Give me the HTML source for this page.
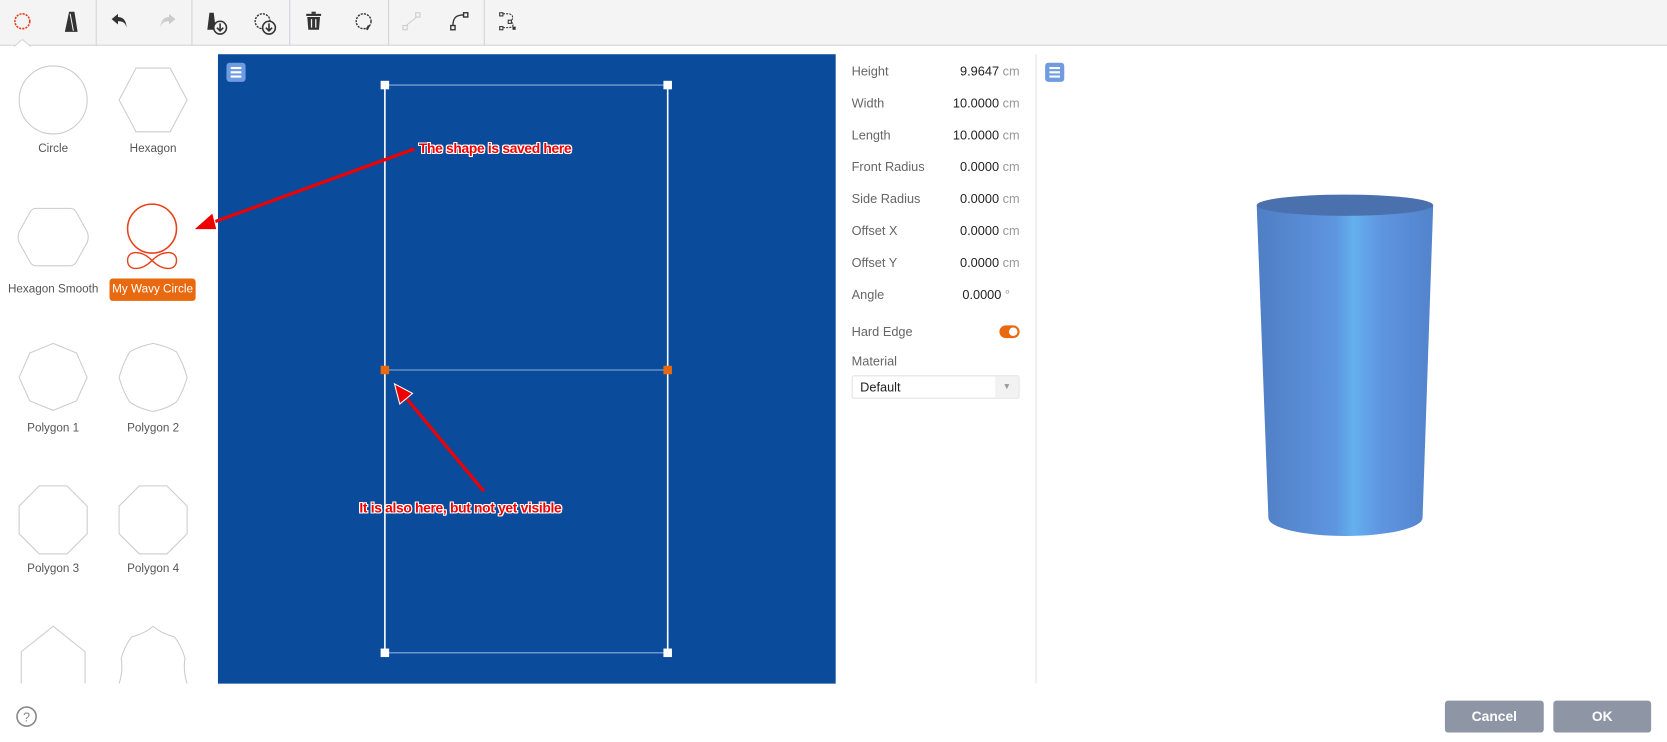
<!DOCTYPE html>
<html><head><meta charset="utf-8"><style>
*{margin:0;padding:0;box-sizing:border-box}
html,body{width:1667px;height:742px;overflow:hidden;background:#fff}
#w{position:absolute;left:0;top:0;width:1568px;height:698px;transform:scale(1.0632);transform-origin:0 0;font-family:"Liberation Sans",Arial,sans-serif}
.tb{position:absolute;left:0;top:0;width:1568px;height:43px;background:#f4f4f5;border-bottom:1px solid #d4d4d8}
.sep{position:absolute;top:0;width:1px;height:43px;background:#d4d4d8}
.ic{position:absolute;top:10px}
.lbl{position:absolute;font-size:11px;color:#555;text-align:center;width:94px}
.canvas{position:absolute;left:205px;top:51px;width:581px;height:592px;background:#0a4b9b}
.prop{position:absolute;left:0;font-size:12px;color:#666}
.val{position:absolute;right:0;font-size:12px;color:#222;width:180px;text-align:right}
.val span{color:#999}
.ann{position:absolute;color:#e00;font-weight:bold;font-size:13px;letter-spacing:-0.3px;text-shadow:-1px -1px 0 #fff,1px -1px 0 #fff,-1px 1px 0 #fff,1px 1px 0 #fff,0 1px 0 #fff,0 -1px 0 #fff,1px 0 0 #fff,-1px 0 0 #fff;white-space:nowrap}
.btn{position:absolute;top:659px;height:30px;background:#8e96a6;border-radius:3px;color:#fff;font-weight:bold;font-size:13px;text-align:center;line-height:30px}
.menu{position:absolute;width:18px;height:18px;background:#6f9be0;border-radius:3px}
.menu i{position:absolute;left:4px;width:10px;height:2px;background:#fff}
</style></head><body><div id="w">
<div class="tb">
<svg class="ic" style="left:11px" width="20" height="20" viewBox="0 0 20 20"><circle cx="10" cy="10" r="7" fill="none" stroke="#e8401a" stroke-width="1.5" stroke-dasharray="2 1"/></svg>
<svg class="ic" style="left:57px" width="20" height="22" viewBox="0 0 20 22"><path d="M8 1 L13 1 L16 20 L4 20 Z" fill="#333"/><path d="M9 3 L12 19" stroke="#f4f4f5" stroke-width="1"/></svg>
<div class="sep" style="left:90px"></div>
<svg class="ic" style="left:103px" width="20" height="20" viewBox="0 0 20 20"><path d="M8 3 L2 8 L8 13 V10 C12 10 15 11 16 16 C16 10 13 6 8 6 Z" fill="#333"/></svg>
<svg class="ic" style="left:147px" width="20" height="20" viewBox="0 0 20 20"><path d="M12 3 L18 8 L12 13 V10 C8 10 5 11 4 16 C4 10 7 6 12 6 Z" fill="#ccc"/></svg>
<div class="sep" style="left:180px"></div>
<svg class="ic" style="left:192px" width="24" height="24" viewBox="0 0 24 24"><path d="M5 2 L9 2 L11 18 L3 18 Z" fill="#333"/><circle cx="15" cy="16" r="6" fill="#f4f4f5" stroke="#333" stroke-width="1.5"/><path d="M15 12 V19 M12 16 L15 19 L18 16" stroke="#333" stroke-width="1.5" fill="none"/></svg>
<svg class="ic" style="left:238px" width="24" height="24" viewBox="0 0 24 24"><circle cx="9" cy="10" r="7" fill="none" stroke="#333" stroke-width="1.3" stroke-dasharray="2 1"/><circle cx="15" cy="16" r="6" fill="#f4f4f5" stroke="#333" stroke-width="1.5"/><path d="M15 12 V19 M12 16 L15 19 L18 16" stroke="#333" stroke-width="1.5" fill="none"/></svg>
<div class="sep" style="left:272px"></div>
<svg class="ic" style="left:287px" width="16" height="20" viewBox="0 0 16 20"><rect x="1" y="3" width="14" height="2" fill="#333"/><rect x="6" y="1" width="4" height="2" fill="#333"/><path d="M2 6 H14 L13 18 H3 Z" fill="#333"/><path d="M6 8 V16 M10 8 V16" stroke="#f4f4f5" stroke-width="1.2"/></svg>
<svg class="ic" style="left:332px" width="20" height="20" viewBox="0 0 20 20"><circle cx="10" cy="10" r="7" fill="none" stroke="#333" stroke-width="1.3" stroke-dasharray="2 1"/><path d="M15 14 L13 18" stroke="#333" stroke-width="2"/></svg>
<div class="sep" style="left:365px"></div>
<svg class="ic" style="left:377px" width="20" height="20" viewBox="0 0 20 20"><rect x="2" y="14" width="4" height="4" fill="none" stroke="#ccc"/><rect x="14" y="2" width="4" height="4" fill="none" stroke="#ccc"/><path d="M5 14 L15 6" stroke="#ccc"/></svg>
<svg class="ic" style="left:422px" width="20" height="20" viewBox="0 0 20 20"><rect x="2" y="14" width="4" height="4" fill="none" stroke="#333" stroke-width="1.3"/><rect x="14" y="2" width="4" height="4" fill="none" stroke="#333" stroke-width="1.3"/><path d="M4 14 C4 6 8 4 14 4" stroke="#333" stroke-width="1.3" fill="none"/></svg>
<div class="sep" style="left:455px"></div>
<svg class="ic" style="left:468px" width="20" height="20" viewBox="0 0 20 20"><rect x="2" y="2" width="3" height="3" fill="none" stroke="#333"/><rect x="2" y="15" width="3" height="3" fill="none" stroke="#333"/><rect x="10" y="9" width="3" height="3" fill="none" stroke="#333"/><path d="M5 3 H10 C15 3 15 8 13 9 M5 16 H10 C15 16 16 12 13 11" stroke="#333" fill="none" stroke-dasharray="2 1"/><rect x="14" y="15" width="3" height="3" fill="#333"/></svg>
<svg style="position:absolute;left:13px;top:37px" width="16" height="8"><path d="M0 7 L8 0 L16 7" fill="#fff" stroke="#d4d4d8"/></svg>
</div>

<svg style="position:absolute;left:0;top:51px" width="205" height="592">
<circle cx="50" cy="43" r="32" fill="none" stroke="#ccc"/>
<polygon points="128,13 160,13 176,43 160,73 128,73 112,43" fill="none" stroke="#ccc"/>
<path d="M34,145 H66 Q70,145 72,149 L82,167 Q84,172 82,177 L72,195 Q70,199 66,199 H34 Q30,199 28,195 L18,177 Q16,172 18,167 L28,149 Q30,145 34,145Z" fill="none" stroke="#ccc"/>
<circle cx="143" cy="164" r="23" fill="none" stroke="#e8401a" stroke-width="1.5"/>
<path d="M143,194 C133,184 120,184 120,194 C120,204 133,204 143,194 C153,184 166,184 166,194 C166,204 153,204 143,194Z" fill="none" stroke="#e8401a" stroke-width="1.3"/>
<polygon points="50,272 72,281 82,304 72,326 50,335 28,326 18,304 28,281" fill="none" stroke="#ccc"/>
<path d="M144,272 Q158,275 166,280 Q172,290 176,304 Q172,318 166,327 Q158,333 144,336 Q130,333 122,327 Q116,318 112,304 Q116,290 122,280 Q130,275 144,272Z" fill="none" stroke="#ccc"/>
<polygon points="37,406 63,406 82,425 82,451 63,470 37,470 18,451 18,425" fill="none" stroke="#ccc"/>
<polygon points="131,406 157,406 176,425 176,451 157,470 131,470 112,451 112,425" fill="none" stroke="#ccc"/>
<path d="M20,592 L20,562 L50,538 L80,562 L80,592" fill="none" stroke="#ccc"/>
<path d="M144,538 Q152,545 164,548 Q170,555 174,568 Q172,580 176,592 M144,538 Q136,545 124,548 Q118,555 114,568 Q116,580 112,592" fill="none" stroke="#ccc"/>
</svg>
<div class="lbl" style="left:3px;top:134px">Circle</div>
<div class="lbl" style="left:97px;top:134px">Hexagon</div>
<div class="lbl" style="left:3px;top:266px">Hexagon Smooth</div>
<div style="position:absolute;left:103px;top:262px;width:81px;height:21px;background:#e8690e;border-radius:3px;color:#fff;font-size:11px;text-align:center;line-height:21px">My Wavy Circle</div>
<div class="lbl" style="left:3px;top:397px">Polygon 1</div>
<div class="lbl" style="left:97px;top:397px">Polygon 2</div>
<div class="lbl" style="left:3px;top:529px">Polygon 3</div>
<div class="lbl" style="left:97px;top:529px">Polygon 4</div>

<div class="canvas"></div>
<div class="menu" style="left:213px;top:59px"><i style="top:4px"></i><i style="top:8px"></i><i style="top:12px"></i></div>
<svg style="position:absolute;left:0;top:0" width="800" height="650">
<path d="M362 80 H628 M362 614 H628" stroke="#8fb0e0" stroke-width="1"/>
<path d="M362 80 V614 M628 80 V614" stroke="#fff" stroke-width="1.5"/>
<path d="M362 348 H628" stroke="#8fb0e0" stroke-width="1"/>
<rect x="358" y="76" width="8" height="8" fill="#fff"/><rect x="624" y="76" width="8" height="8" fill="#fff"/>
<rect x="358" y="610" width="8" height="8" fill="#fff"/><rect x="624" y="610" width="8" height="8" fill="#fff"/>
<rect x="358" y="344" width="8" height="8" fill="#e8690e"/><rect x="624" y="344" width="8" height="8" fill="#e8690e"/>
<path d="M390 140 L198 210" stroke="#e00" stroke-width="3"/>
<polygon points="182,216 200,200 204,216" fill="#e00" stroke="#fff" stroke-width="1"/>
<path d="M455 462 L380 372" stroke="#e00" stroke-width="3"/>
<polygon points="371,361 388,370 376,380" fill="#e00" stroke="#fff" stroke-width="1"/>
</svg>
<div class="ann" style="left:394px;top:132px">The shape is saved here</div>
<div class="ann" style="left:338px;top:470px">It is also here, but not yet visible</div>

<div style="position:absolute;left:801px;top:60px;width:158px;height:330px">
<div class="prop" style="top:0">Height</div><div class="val" style="top:0">9.9647 <span>cm</span></div>
<div class="prop" style="top:30px">Width</div><div class="val" style="top:30px">10.0000 <span>cm</span></div>
<div class="prop" style="top:60px">Length</div><div class="val" style="top:60px">10.0000 <span>cm</span></div>
<div class="prop" style="top:90px">Front Radius</div><div class="val" style="top:90px">0.0000 <span>cm</span></div>
<div class="prop" style="top:120px">Side Radius</div><div class="val" style="top:120px">0.0000 <span>cm</span></div>
<div class="prop" style="top:150px">Offset X</div><div class="val" style="top:150px">0.0000 <span>cm</span></div>
<div class="prop" style="top:180px">Offset Y</div><div class="val" style="top:180px">0.0000 <span>cm</span></div>
<div class="prop" style="top:210px">Angle</div><div class="val" style="top:210px;right:9px">0.0000 <span>°</span></div>
<div class="prop" style="top:245px">Hard Edge</div>
<div style="position:absolute;right:0;top:246px;width:19px;height:12px;border-radius:6px;background:#e8690e"><div style="position:absolute;right:2px;top:2px;width:8px;height:8px;border-radius:50%;background:#fff"></div></div>
<div class="prop" style="top:273px">Material</div>
<div style="position:absolute;left:0;top:293px;width:158px;height:22px;border:1px solid #e4e4e4;border-radius:2px;font-size:12px;color:#222;line-height:20px;padding-left:7px">Default<div style="position:absolute;right:0;top:0;width:22px;height:20px;background:#f2f2f2;color:#999;font-size:8px;text-align:center">▼</div></div>
</div>
<div style="position:absolute;left:974px;top:51px;width:1px;height:592px;background:#e4e4e4"></div>
<div class="menu" style="left:983px;top:59px"><i style="top:4px"></i><i style="top:8px"></i><i style="top:12px"></i></div>

<svg style="position:absolute;left:1170px;top:175px" width="190" height="360">
<defs><linearGradient id="g" x1="0" x2="1"><stop offset="0" stop-color="#4f7ec4"/><stop offset="0.45" stop-color="#5e96e0"/><stop offset="0.55" stop-color="#64b0ee"/><stop offset="0.7" stop-color="#5f95e0"/><stop offset="1" stop-color="#5283cc"/></linearGradient></defs>
<path d="M12 18 L23 312 A72 17 0 0 0 168 312 L178 18 Z" fill="url(#g)"/>
<ellipse cx="95" cy="18" rx="83" ry="10" fill="#4a71ad"/>
</svg>

<svg style="position:absolute;left:14px;top:663px" width="22" height="22"><circle cx="11" cy="11" r="9" fill="none" stroke="#888" stroke-width="1.5"/><text x="11" y="15.5" font-size="12" text-anchor="middle" fill="#888" font-family="Liberation Sans">?</text></svg>
<div class="btn" style="left:1359px;width:93px">Cancel</div>
<div class="btn" style="left:1461px;width:92px">OK</div>
</div></body></html>
